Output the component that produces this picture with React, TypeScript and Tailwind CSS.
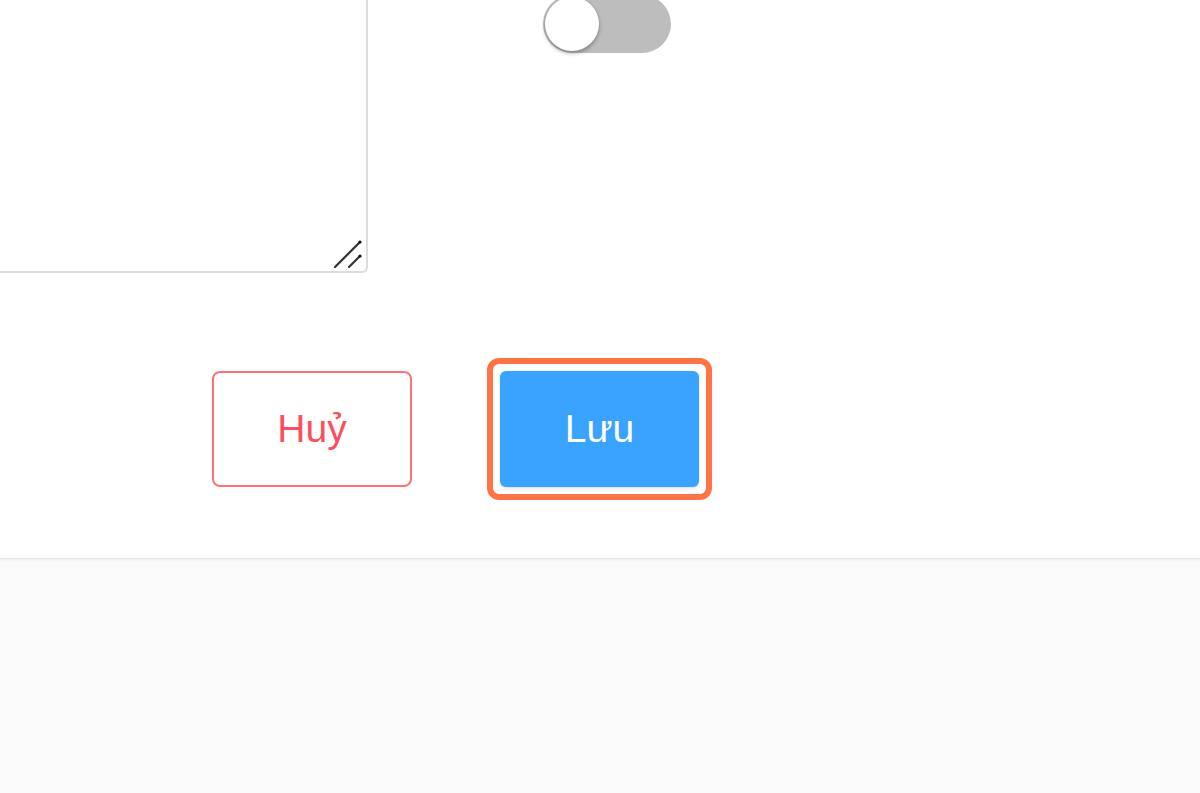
export default function App() {
  return (
    <div className="w-[1200px] h-[793px] overflow-hidden bg-white flex flex-col font-['Liberation_Sans',Arial,sans-serif]">
      <div className="h-[558px] flex flex-col">
        {/* form fields */}
        <div className="flex items-start">
          <div className="relative ml-[-24px] mt-[-30px]">
            <textarea
              className="block w-[392px] h-[303px] border-2 border-[#dcdcdc] rounded-md bg-white outline-none resize-none"
              defaultValue=""
            />
            <svg className="absolute right-[6px] bottom-[4px]" width="30" height="30" viewBox="0 0 30 30">
              <line x1="3" y1="28" x2="28" y2="3" stroke="#333" strokeWidth="2.2" strokeLinecap="round" />
              <line x1="17" y1="28" x2="28" y2="17" stroke="#333" strokeWidth="2.2" strokeLinecap="round" />
              <circle cx="28" cy="3" r="1.6" fill="#111" />
              <circle cx="28" cy="17" r="1.6" fill="#111" />
            </svg>
          </div>
          <div className="ml-[175px] mt-[-5px] w-[128px] h-[58px] rounded-full bg-[#bdbdbd] p-[2px] flex items-center">
            <div className="w-[54px] h-[54px] rounded-full bg-white shadow-[0_2px_4px_rgba(0,0,0,0.35)]" />
          </div>
        </div>

        {/* actions */}
        <div className="flex items-center mt-[85px] pl-[212px]">
          <button className="w-[200px] h-[116px] rounded-lg border-2 border-[#ff6f78] bg-white text-[#ff4d5e] text-[39px]">
            Huỷ
          </button>
          <div className="ml-[75px] rounded-xl border-[6px] border-[#ff7345] p-[7px]">
            <button className="w-[199px] h-[116px] rounded-md bg-[#3aa3ff] text-white text-[39px] shadow-[0_1px_3px_rgba(0,0,0,0.15)]">
              Lưu
            </button>
          </div>
        </div>
      </div>
      <div className="flex-1 bg-[#fafafa] border-t border-[#e6e6e6] shadow-[inset_0_3px_3px_-2px_rgba(0,0,0,0.05)]" />
    </div>
  );
}
